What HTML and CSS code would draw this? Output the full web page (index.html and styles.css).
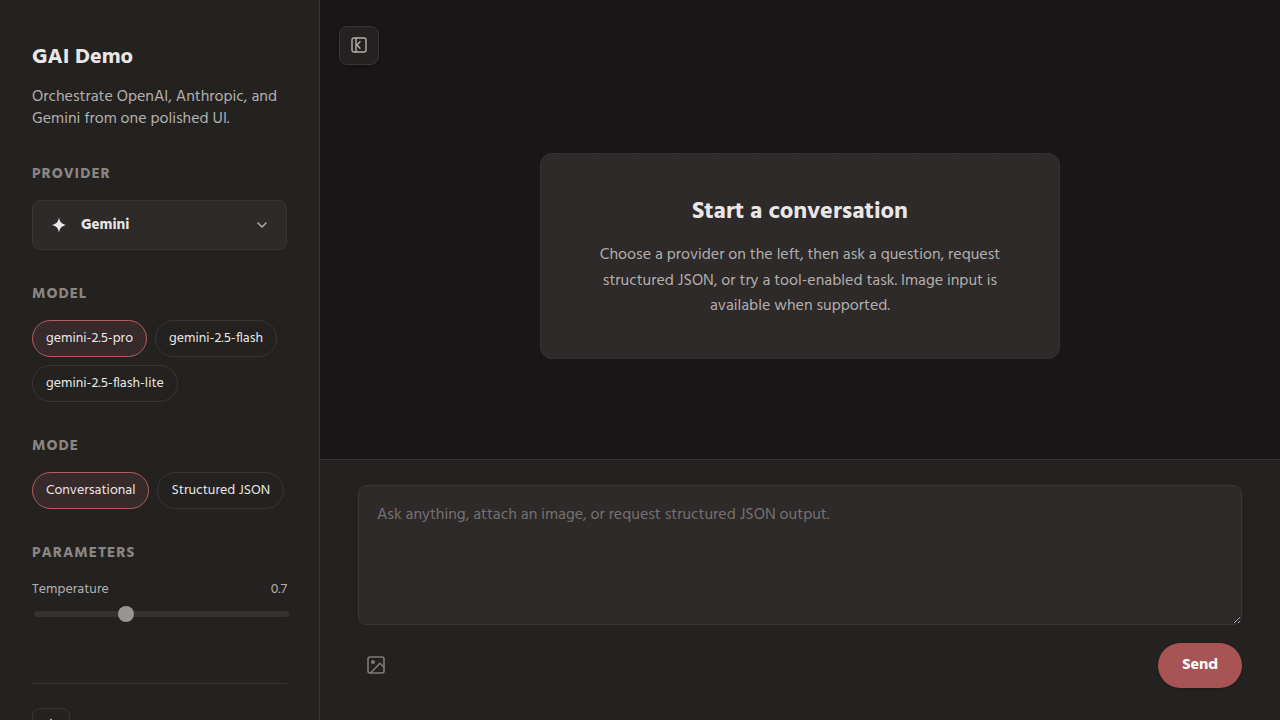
FILE: index.html
```html
<!DOCTYPE html>
<html lang="en">
<head>
<meta charset="utf-8">
<meta name="viewport" content="width=device-width, initial-scale=1">
<title>GAI Demo</title>
<link rel="stylesheet" href="styles.css">
</head>
<body>
<div class="app">
  <aside class="sidebar">
    <header class="brand">
      <h1 class="brand-title">GAI Demo</h1>
      <p class="brand-text">Orchestrate OpenAI, Anthropic, and Gemini from one polished UI.</p>
    </header>

    <section class="group">
      <h2 class="group-title">Provider</h2>
      <button class="provider" type="button" aria-haspopup="listbox">
        <svg class="provider-icon" viewBox="0 0 16 16" aria-hidden="true"><path d="M8 0.500C8.800 5 11 7.200 15.500 8C11 8.800 8.800 11 8 15.500C7.200 11 5 8.800 0.500 8C5 7.200 7.200 5 8 0.500Z" fill="currentColor"/></svg>
        <span class="provider-name">Gemini</span>
        <svg class="chevron" viewBox="0 0 16 16" aria-hidden="true"><path d="M4 6l4 4 4-4" fill="none" stroke="currentColor" stroke-width="1.500" stroke-linecap="round" stroke-linejoin="round"/></svg>
      </button>
    </section>

    <section class="group">
      <h2 class="group-title">Model</h2>
      <div class="chips">
        <button class="chip chip-active" type="button" aria-pressed="true">gemini-2.5-pro</button>
        <button class="chip" type="button" aria-pressed="false">gemini-2.5-flash</button>
        <button class="chip" type="button" aria-pressed="false">gemini-2.5-flash-lite</button>
      </div>
    </section>

    <section class="group">
      <h2 class="group-title">Mode</h2>
      <div class="chips">
        <button class="chip chip-active" type="button" aria-pressed="true">Conversational</button>
        <button class="chip" type="button" aria-pressed="false">Structured JSON</button>
      </div>
    </section>

    <section class="group">
      <h2 class="group-title">Parameters</h2>
      <div class="param">
        <div class="param-head">
          <label for="temperature">Temperature</label>
          <output for="temperature">0.7</output>
        </div>
        <input class="slider" id="temperature" type="range" min="0" max="2" step="0.1" value="0.7">
      </div>
    </section>

    <footer class="sidebar-foot">
      <button class="theme-button" type="button" aria-label="Toggle theme">
        <svg class="theme-icon" viewBox="0 0 24 24" aria-hidden="true"><g fill="none" stroke="currentColor" stroke-width="2" stroke-linecap="round"><circle cx="12" cy="12" r="4"/><path d="M12 2v2M12 20v2M4.900 4.900l1.400 1.400M17.700 17.700l1.400 1.400M2 12h2M20 12h2M6.300 17.700l-1.400 1.400M19.100 4.900l-1.400 1.400"/></g></svg>
      </button>
    </footer>
  </aside>

  <main class="main">
    <div class="topbar">
      <button class="collapse" type="button" aria-label="Collapse sidebar">
        <svg class="collapse-icon" viewBox="0 0 16 16" aria-hidden="true"><g fill="none" stroke="currentColor" stroke-width="1.400" stroke-linecap="round" stroke-linejoin="round"><rect x="1" y="1" width="14" height="14" rx="2"/><path d="M5 1v14M9 4.700l-3 3.300 3 3.300"/></g></svg>
      </button>
    </div>
    <section class="stage">
      <div class="empty">
        <h2 class="empty-title">Start a conversation</h2>
        <p class="empty-text">Choose a provider on the left, then ask a question, request structured JSON, or try a tool-enabled task. Image input is available when supported.</p>
      </div>
    </section>
    <form class="composer">
      <textarea class="prompt" aria-label="Message" placeholder="Ask anything, attach an image, or request structured JSON output."></textarea>
      <div class="actions">
        <button class="attach" type="button" aria-label="Attach image">
          <svg class="attach-icon" viewBox="0 0 18 18" aria-hidden="true"><g fill="none" stroke="currentColor" stroke-width="1.600" stroke-linecap="round" stroke-linejoin="round"><rect x="1" y="1" width="16" height="16" rx="2"/><circle cx="6" cy="6" r="1.200" fill="currentColor"/><path d="M17 11.300l-4-4L3.500 17"/></g></svg>
        </button>
        <button class="send" type="button">Send</button>
      </div>
    </form>
  </main>
</div>
</body>
</html>
```

FILE: styles.css
```css
* { box-sizing: border-box; margin: 0; }

body {
  background: #181616;
  color: #e8e6e6;
  font-family: Hind, "Noto Sans", sans-serif;
  font-size: 16px;
  line-height: 1.6;
}

button, textarea { font-family: inherit; color: inherit; }
button { cursor: pointer; }
svg { display: block; }

.app {
  display: grid;
  grid-template-columns: 320px 1fr;
  height: 100vh;
  overflow: hidden;
}

.sidebar {
  display: flex;
  flex-direction: column;
  gap: 32px;
  padding: 40px 32px;
  background: #242220;
  border-right: 1px solid #383534;
  overflow: hidden;
}

.brand { display: flex; flex-direction: column; gap: 10px; }
.brand-title { font-size: 22px; line-height: 36px; font-weight: 700; }
.brand-text { font-size: 16px; line-height: 22px; color: #b3afae; }

.group { display: flex; flex-direction: column; gap: 14px; }
.group-title {
  font-size: 15px;
  line-height: 24px;
  font-weight: 700;
  letter-spacing: 1px;
  text-transform: uppercase;
  color: #8a8583;
}

.provider {
  display: flex;
  align-items: center;
  gap: 14px;
  width: 100%;
  height: 50px;
  padding: 0 16px 0 18px;
  background: #2e2a29;
  border: 1px solid #383534;
  border-radius: 8px;
  font-size: 15px;
  font-weight: 700;
}
.provider-icon { width: 16px; height: 16px; }
.provider-name { flex: 1; text-align: left; }
.chevron { width: 16px; height: 16px; color: #b3afae; }

.chips { display: flex; flex-wrap: wrap; gap: 8px; }
.chip {
  height: 37px;
  padding: 0 13px;
  background: transparent;
  border: 1px solid #383534;
  border-radius: 20px;
  font-size: 14px;
}
.chip-active { background: #372a2a; border-color: #b85c5c; }

.param { display: flex; flex-direction: column; gap: 5px; }
.param-head {
  display: flex;
  justify-content: space-between;
  font-size: 14px;
  line-height: 22px;
  color: #b3afae;
}
.slider {
  appearance: none;
  width: 100%;
  height: 16px;
  margin: 0 2px;
  background: transparent;
}
.slider::-webkit-slider-runnable-track {
  height: 6px;
  background: #353130;
  border-radius: 3px;
}
.slider::-webkit-slider-thumb {
  appearance: none;
  width: 16px;
  height: 16px;
  margin-top: -5px;
  background: #999594;
  border-radius: 50%;
}

.sidebar-foot {
  margin-top: 29px;
  padding-top: 24px;
  border-top: 1px solid #383534;
}
.theme-button {
  display: grid;
  place-items: center;
  width: 38px;
  height: 38px;
  padding: 0;
  background: transparent;
  border: 1px solid #383534;
  border-radius: 8px;
}
.theme-icon { width: 18px; height: 18px; }

.main { display: flex; flex-direction: column; min-width: 0; }
.topbar { padding: 26px 19px 0; }
.collapse {
  display: grid;
  place-items: center;
  width: 40px;
  height: 39px;
  padding: 0 0 1px;
  background: #242220;
  border: 1px solid #383534;
  border-radius: 8px;
  box-shadow: 0 1px 3px rgba(0, 0, 0, 0.3);
  color: #b3afae;
}
.collapse-icon { width: 16px; height: 16px; }

.stage {
  flex: 1;
  display: grid;
  place-items: center;
  padding: 0 38px 12px;
}
.empty {
  max-width: 520px;
  padding: 39px 48px 38px;
  background: #2e2a29;
  border: 1px dashed #383534;
  border-radius: 12px;
  text-align: center;
}
.empty-title { margin-bottom: 12px; font-size: 24px; line-height: 38px; font-weight: 700; }
.empty-text { color: #b3afae; }

.composer {
  display: flex;
  flex-direction: column;
  gap: 18px;
  padding: 25px 38px 32px;
  background: #242220;
  border-top: 1px solid #383534;
}
.prompt {
  display: block;
  width: 100%;
  height: 140px;
  padding: 16px 18px;
  background: #2e2a29;
  border: 1px solid #383534;
  border-radius: 8px;
  font-size: 16px;
  line-height: 26px;
  resize: vertical;
}
.prompt::placeholder { color: #757170; }
.actions { display: flex; align-items: center; justify-content: space-between; }
.attach {
  display: grid;
  place-items: center;
  width: 36px;
  height: 36px;
  padding: 0 0 2px;
  background: transparent;
  border: 0;
  color: #807b79;
}
.attach-icon { width: 18px; height: 18px; }
.send {
  height: 45px;
  padding: 0 24px 2px;
  background: #a85454;
  border: 0;
  border-radius: 24px;
  box-shadow: 0 1px 3px rgba(0, 0, 0, 0.2);
  color: #fff;
  font-size: 16px;
  font-weight: 700;
}
```
